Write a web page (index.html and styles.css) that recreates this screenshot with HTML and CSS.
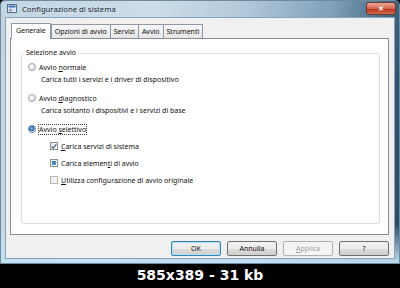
FILE: index.html
```html
<!DOCTYPE html>
<html lang="it">
<head>
<title>Configurazione di sistema</title>
<meta charset="utf-8">
<link rel="stylesheet" href="styles.css">
</head>
<body>

<div class="window">
  <div class="titlebar">
    <svg class="app_icon" width="10" height="10" viewBox="0 0 10 10">
      <rect x="0.5" y="0.5" width="9" height="8" fill="#dfe9f5" stroke="#5a6f8a"/>
      <rect x="1.5" y="1.5" width="7" height="2" fill="#3c6fb4"/>
      <rect x="2" y="5" width="3" height="2.5" fill="#8aa3c4"/>
    </svg>
    <span class="title">Configurazione di sistema</span>
    <span class="close_btn">&#x2715;</span>
  </div>

  <div class="client">
    <ul class="tabs">
      <li class="tab selected">Generale</li>
      <li class="tab">Opzioni di avvio</li>
      <li class="tab">Servizi</li>
      <li class="tab">Avvio</li>
      <li class="tab">Strumenti</li>
    </ul>

    <div class="panel">
      <fieldset class="group">
        <legend>Selezione avvio</legend>

        <div class="option first">
          <span class="radio"></span>
          <span>Avvio <u>n</u>ormale</span>
        </div>
        <p class="hint">Carica tutti i servizi e i driver di dispositivo</p>

        <div class="option">
          <span class="radio"></span>
          <span>Avvio <u>d</u>iagnostico</span>
        </div>
        <p class="hint">Carica soltanto i dispositivi e i servizi di base</p>

        <div class="option">
          <span class="radio checked"></span>
          <span class="focus">Avvio <u>s</u>elettivo</span>
        </div>

        <ul class="checks">
          <li class="option">
            <span class="check">
              <svg width="7" height="7" viewBox="0 0 7 7"><path d="M0.8 3.6 L2.7 5.6 L6.2 1" fill="none" stroke="#2a4a78" stroke-width="1.2"/></svg>
            </span>
            <span><u>C</u>arica servizi di sistema</span>
          </li>
          <li class="option">
            <span class="check mixed"></span>
            <span>Carica elemen<u>t</u>i di avvio</span>
          </li>
          <li class="option">
            <span class="check off"></span>
            <span><u>U</u>tilizza configurazione di avvio originale</span>
          </li>
        </ul>
      </fieldset>
    </div>

    <div class="buttons">
      <button class="btn default">OK</button>
      <button class="btn">Annulla</button>
      <button class="btn" disabled><u>A</u>pplica</button>
      <button class="btn">?</button>
    </div>
  </div>
</div>

<div class="info_bar">585x389 - 31 kb</div>

</body>
</html>
```

FILE: styles.css
```css
body {
  margin: 0;
  background: #000;
  font-family: "Noto Sans", Arial, sans-serif;
  font-size: 7px;
  color: #111;
}
ul {
  margin: 0;
  padding: 0;
  list-style: none;
}
p {
  margin: 0;
}

.window {
  height: 264px;
  box-sizing: border-box;
  padding: 0 6px 6px 6px;
  border-radius: 5px 5px 0 0;
  display: flex;
  flex-direction: column;
  background:
    linear-gradient(to bottom, rgba(255,255,255,0) 85%, #c4e2f2 100%),
    linear-gradient(100deg, #c2d5e3 0%, #cddde9 35%, #b2c9da 55%, #7f9fb8 75%, #2f5570 92%, #264a63 100%);
  box-shadow: inset 0 0 0 1px #6f8aa0;
}

.titlebar {
  height: 18px;
  display: flex;
  align-items: center;
  gap: 5px;
  padding-left: 1px;
}
.title {
  font-size: 7.7px;
  color: #1b2630;
  text-shadow: 0 0 4px #e8f1f8;
}
.close_btn {
  align-self: flex-start;
  margin: 2px -2px 0 auto;
  width: 28px;
  height: 11px;
  border: 1px solid #6b3a30;
  border-radius: 3px;
  background: linear-gradient(to bottom, #e9a89a 0%, #d4634c 50%, #b8321c 55%, #d26a4c 100%);
  color: #fff;
  font-size: 7px;
  font-weight: bold;
  text-align: center;
  line-height: 11px;
}

.client {
  flex: 1;
  background: #f0f0f0;
  box-shadow: 0 0 0 1px #8ba3b8;
  display: flex;
  flex-direction: column;
  padding: 4px 5px 0 4px;
}

.tabs {
  display: flex;
  padding-left: 3px;
  height: 16px;
  align-items: flex-end;
}
.tab {
  height: 14px;
  box-sizing: border-box;
  padding: 0 3px;
  line-height: 13px;
  border: 1px solid #8d99a6;
  border-bottom: none;
  margin-right: -1px;
  background: linear-gradient(to bottom, #f7f7f7, #e6e6e6);
}
.tab.selected {
  height: 16px;
  line-height: 14px;
  margin-bottom: -1px;
  background: #fff;
  position: relative;
  z-index: 1;
  padding: 0 4px;
  margin-left: -2px;
  margin-right: 0;
}

.panel {
  height: 197px;
  box-sizing: border-box;
  background: #fff;
  border: 1px solid #898c95;
  padding: 9px 8px 0 10px;
}

.group {
  margin: 0;
  height: 176px;
  box-sizing: border-box;
  border: 1px solid #d5dfe5;
  border-radius: 3px;
  padding: 0 6px;
}
.group legend {
  padding: 0 2px;
  margin-left: -4px;
  line-height: 10px;
}

.option {
  display: flex;
  align-items: center;
  gap: 3px;
  height: 10px;
}
.group > .option {
  margin-top: 8px;
}
.group > .option.first {
  margin-top: 4px;
}
.hint {
  margin: 3px 0 0 13px;
  line-height: 10px;
}

.radio {
  width: 6px;
  height: 6px;
  border-radius: 50%;
  border: 1px solid #a4a4a4;
  background: radial-gradient(circle at 40% 35%, #ffffff 0%, #e3e3e3 60%, #cfcfcf 100%);
}
.radio.checked {
  border-color: #6e87a8;
  background: radial-gradient(circle at 45% 40%, #9fd3f2 0%, #2f7bc0 40%, #1d4f86 55%, #e9eef3 62%, #dde4ea 100%);
}

.focus {
  outline: 1px dotted #444;
}

.checks {
  margin: 7px 0 0 22px;
}
.checks .option {
  margin-bottom: 7px;
}
.check {
  width: 6px;
  height: 6px;
  border: 1px solid #8f8f8f;
  background: linear-gradient(135deg, #e6e6e6, #fafafa);
  display: flex;
  align-items: center;
  justify-content: center;
}
.check svg {
  display: block;
}
.check.mixed {
  background: linear-gradient(135deg, #2d6ea6, #5da5d6);
  box-shadow: inset 0 0 0 1px #eef3f8;
}
.check.off {
  border-color: #b7b7b7;
  background: linear-gradient(135deg, #ececec, #f8f8f8);
}

.buttons {
  display: flex;
  justify-content: flex-end;
  gap: 6px;
  margin-top: 6px;
}
.btn {
  width: 50px;
  height: 15px;
  padding: 0;
  font-family: inherit;
  font-size: 7px;
  color: #111;
  border: 1px solid #707070;
  border-radius: 2px;
  background: linear-gradient(to bottom, #f2f2f2 0%, #ebebeb 50%, #dddddd 51%, #cfcfcf 100%);
}
.btn.default {
  border-color: #3c7fb1;
  box-shadow: inset 0 0 0 1px #a8e0f6;
}
.btn[disabled] {
  color: #a0a0a0;
  border-color: #adb2b5;
  background: #f4f4f4;
}

.info_bar {
  height: 24px;
  line-height: 23px;
  color: #fff;
  font-family: "DejaVu Sans", sans-serif;
  font-weight: bold;
  font-size: 14px;
  text-align: center;
}
```
